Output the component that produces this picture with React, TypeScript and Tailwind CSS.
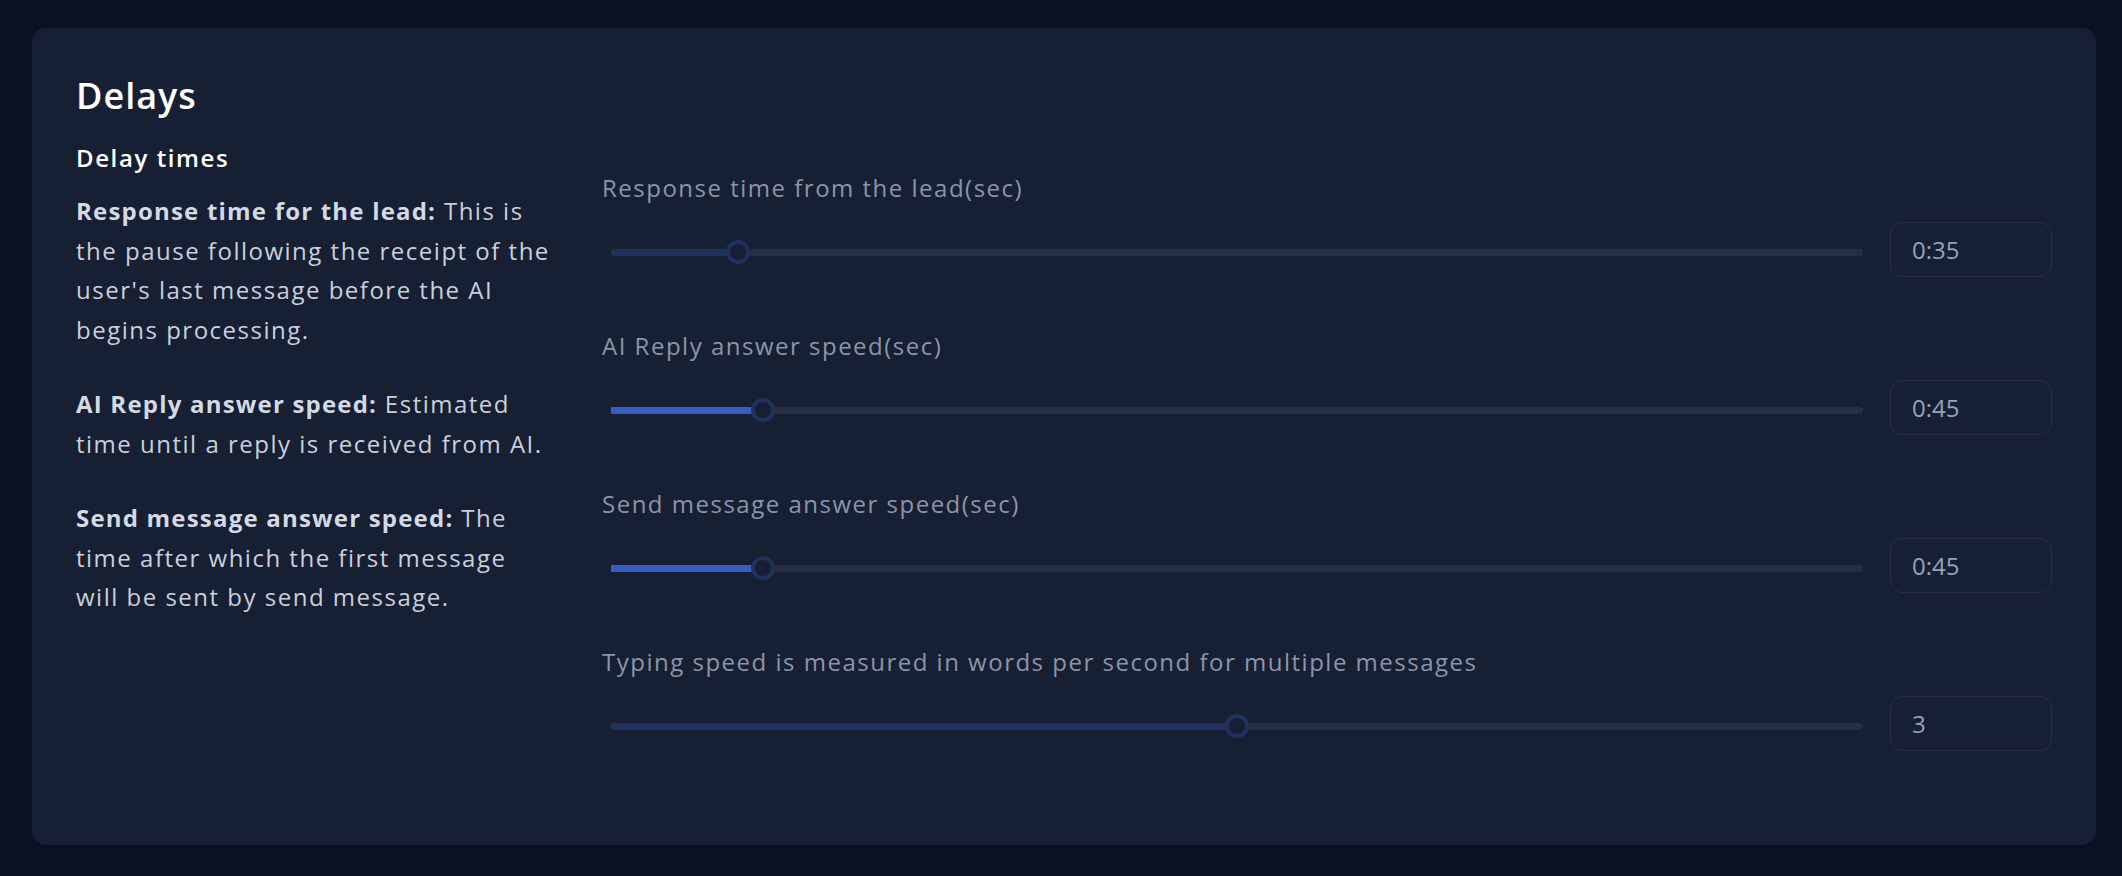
type DelaySlider = {
    label: string;
    value: string;
    frac: number;
    fill: string;
};

const sliders: DelaySlider[] = [
    { label: "Response time from the lead(sec)", value: "0:35", frac: 0.1014, fill: "bg-[#1f315c] rounded-full" },
    { label: "AI Reply answer speed(sec)", value: "0:45", frac: 0.1213, fill: "bg-[#3a5bbf]" },
    { label: "Send message answer speed(sec)", value: "0:45", frac: 0.1213, fill: "bg-[#3a5bbf]" },
    {
        label: "Typing speed is measured in words per second for multiple messages",
        value: "3",
        frac: 0.5,
        fill: "bg-[#1f315c] rounded-full",
    },
];

function SliderRow({ item }: { item: DelaySlider }) {
    return (
        <div>
            <div className="text-[24px] leading-[32px] tracking-[1.5px] text-[#8b95a8]">{item.label}</div>
            <div className="mt-[18px] flex h-[55px] items-center gap-[27px]">
                <div className="relative ml-[9px] mt-[5px] h-[7px] flex-1 rounded-full bg-[#262f42]">
                    <div className={"absolute left-0 top-0 h-full " + item.fill} style={{ width: `${item.frac * 100}%` }} />
                    <div
                        className="absolute top-1/2 h-6 w-6 -translate-x-1/2 -translate-y-1/2 rounded-full border-[4px] border-[#1f315c] bg-[#171f33]"
                        style={{ left: `${item.frac * 100}%` }}
                    />
                </div>
                <input
                    readOnly
                    value={item.value}
                    className="h-[55px] w-[162px] rounded-[12px] border border-[#262e3f] bg-transparent pl-[21px] text-[24px] text-[#94a3b8] outline-none"
                />
            </div>
        </div>
    );
}

export default function App() {
    return (
        <div className="flex h-screen flex-col bg-[#0b1022] pb-[31px] pl-8 pr-[26px] pt-[28px] font-['Open_Sans',sans-serif]">
            <div className="flex-1 rounded-[14px] bg-[#171f33] px-[44px] pt-[46px]">
                <h1 className="text-[36px] font-semibold leading-[44px] tracking-[1px] text-white">Delays</h1>

                <div className="mt-[24px] grid grid-cols-[476px_1fr] gap-x-[50px]">
                    <div>
                        <h2 className="text-[24px] font-semibold leading-[32px] tracking-[1.6px] text-white">Delay times</h2>
                        <div className="mt-[17px] text-[24px] leading-[39.5px] tracking-[1.5px] text-[#c9d0dc]">
                            <p>
                                <b className="font-bold tracking-[1.2px] text-[#d3dae6]">Response time for the lead:</b> This
                                is the pause following the receipt of the user's last message before the AI begins
                                processing.
                            </p>
                            <p className="mt-[35px]">
                                <b className="font-bold tracking-[1.2px] text-[#d3dae6]">AI Reply answer speed:</b> Estimated
                                time until a reply is received from AI.
                            </p>
                            <p className="mt-[35px]">
                                <b className="font-bold tracking-[1.2px] text-[#d3dae6]">Send message answer speed:</b> The
                                time after which the first message will be sent by send message.
                            </p>
                        </div>
                    </div>

                    <div className="flex flex-col gap-[53px] pt-[30px]">
                        {sliders.map((s) => (
                            <SliderRow key={s.label} item={s} />
                        ))}
                    </div>
                </div>
            </div>
        </div>
    );
}
